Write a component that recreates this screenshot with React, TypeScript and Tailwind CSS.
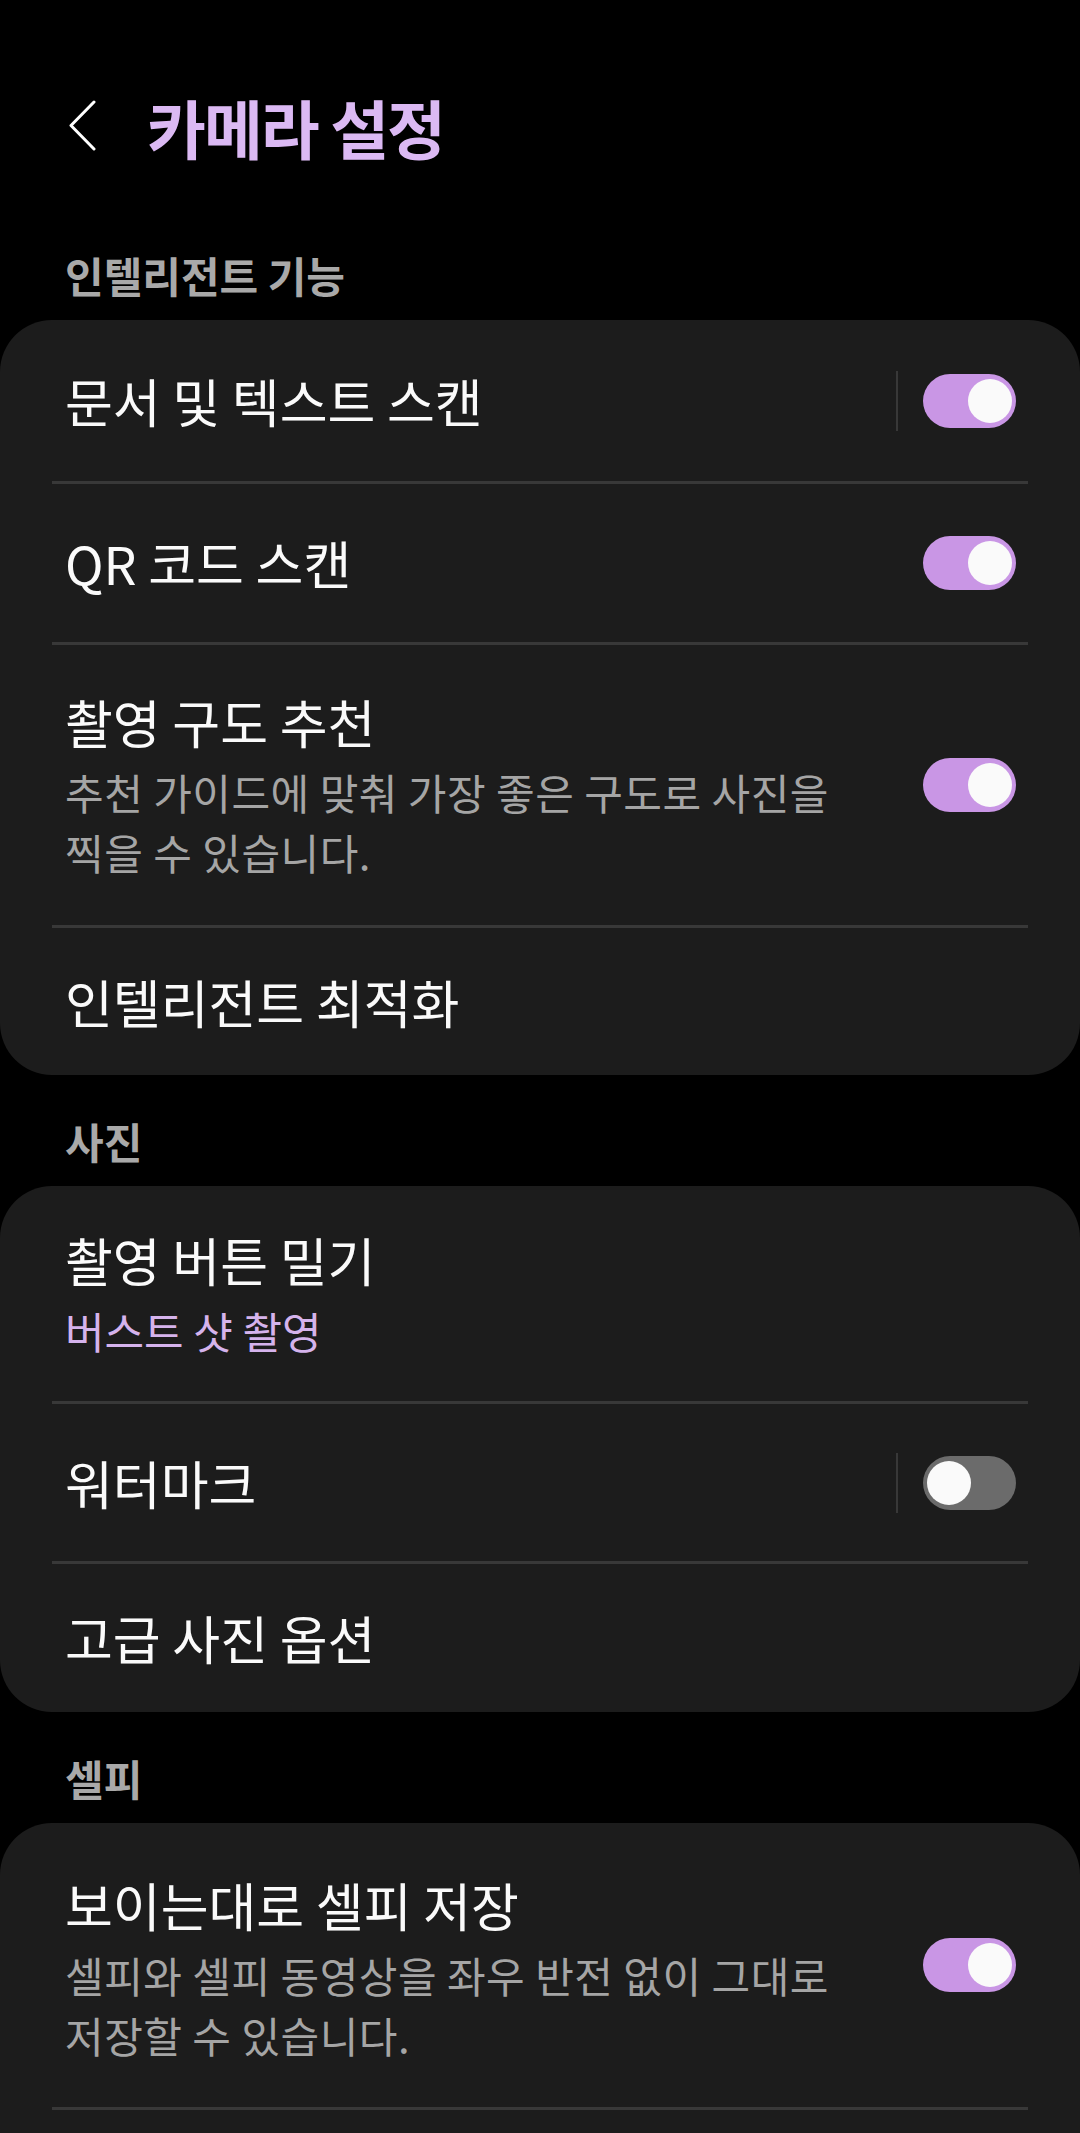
import React from 'react';

type ToggleProps = { on: boolean };

const Toggle = ({ on }: ToggleProps) => (
  <div
    className={`flex h-[54px] w-[93px] shrink-0 items-center rounded-full px-[4px] ${
      on ? 'justify-end bg-[#c996e5]' : 'justify-start bg-[#6b6b6b]'
    }`}
  >
    <div className="h-[44px] w-[44px] rounded-full bg-[#fafafa]" />
  </div>
);

const Divider = () => <div className="mx-[52px] h-[3px] bg-[#383838]" />;

const Separator = () => <div className="mr-[25px] h-[60px] w-[2px] shrink-0 bg-[#383838]" />;

const SectionHeader = ({ label }: { label: string }) => (
  <div className="flex h-[111px] items-center pl-[65px] pt-[20px]">
    <h2 className="text-[42px] font-bold leading-none text-[#a9a9a9]">{label}</h2>
  </div>
);

type RowProps = {
  title: string;
  height: string;
  toggle?: boolean;
  separator?: boolean;
};

const SimpleRow = ({ title, height, toggle, separator }: RowProps) => (
  <div className={`flex ${height} items-center pl-[65px] pr-[64px]`}>
    <p className="flex-1 text-[52px] leading-none text-[#fafafa]">{title}</p>
    {separator && <Separator />}
    {toggle !== undefined && <Toggle on={toggle} />}
  </div>
);

type DescRowProps = {
  title: string;
  desc: string;
  height: string;
  pad: string;
  toggle: boolean;
};

const DescRow = ({ title, desc, height, pad, toggle }: DescRowProps) => (
  <div className={`flex ${height} items-center pl-[65px] pr-[64px]`}>
    <div className={`flex h-full flex-1 flex-col pr-[50px] ${pad}`}>
      <p className="text-[52px] leading-[60px] text-[#fafafa]">{title}</p>
      <p className="mt-[10px] break-keep text-[42px] leading-[60px] tracking-[0.5px] text-[#a5a5a5]">{desc}</p>
    </div>
    <Toggle on={toggle} />
  </div>
);

export default function App() {
  return (
    <div className="min-h-screen w-[1080px] bg-black font-['Noto_Sans_CJK_KR','Noto_Sans',sans-serif]">
      {/* App bar */}
      <div className="flex h-[209px] items-center pt-[42px]">
        <svg className="ml-[67px] h-[51px] w-[30px]" viewBox="0 0 30 51" fill="none">
          <polyline points="27,2 4,25.5 27,49" stroke="#ffffff" strokeWidth="3" strokeLinecap="round" strokeLinejoin="round" />
        </svg>
        <h1 className="ml-[50px] text-[64px] font-bold leading-none tracking-[-2px] text-[#dbb9f3]">카메라 설정</h1>
      </div>

      <SectionHeader label="인텔리전트 기능" />
      <div className="rounded-[52px] bg-[#1c1c1c]">
        <SimpleRow title="문서 및 텍스트 스캔" height="h-[161px]" toggle separator />
        <Divider />
        <SimpleRow title="QR 코드 스캔" height="h-[158px]" toggle />
        <Divider />
        <DescRow
          title="촬영 구도 추천"
          desc="추천 가이드에 맞춰 가장 좋은 구도로 사진을 찍을 수 있습니다."
          height="h-[280px]"
          pad="pt-[47px]"
          toggle
        />
        <Divider />
        <SimpleRow title="인텔리전트 최적화" height="h-[147px]" />
      </div>

      <SectionHeader label="사진" />
      <div className="rounded-[52px] bg-[#1c1c1c]">
        <div className="flex h-[215px] flex-col pl-[65px] pt-[44px]">
          <p className="text-[52px] leading-[60px] text-[#fafafa]">촬영 버튼 밀기</p>
          <p className="mt-[10px] text-[43px] leading-[60px] text-[#d5b3ec]">버스트 샷 촬영</p>
        </div>
        <Divider />
        <SimpleRow title="워터마크" height="h-[157px]" toggle={false} separator />
        <Divider />
        <SimpleRow title="고급 사진 옵션" height="h-[148px]" />
      </div>

      <SectionHeader label="셀피" />
      <div className="rounded-t-[52px] bg-[#1c1c1c]">
        <DescRow
          title="보이는대로 셀피 저장"
          desc="셀피와 셀피 동영상을 좌우 반전 없이 그대로 저장할 수 있습니다."
          height="h-[284px]"
          pad="pt-[52px]"
          toggle
        />
        <Divider />
        <div className="h-[40px]" />
      </div>
    </div>
  );
}
